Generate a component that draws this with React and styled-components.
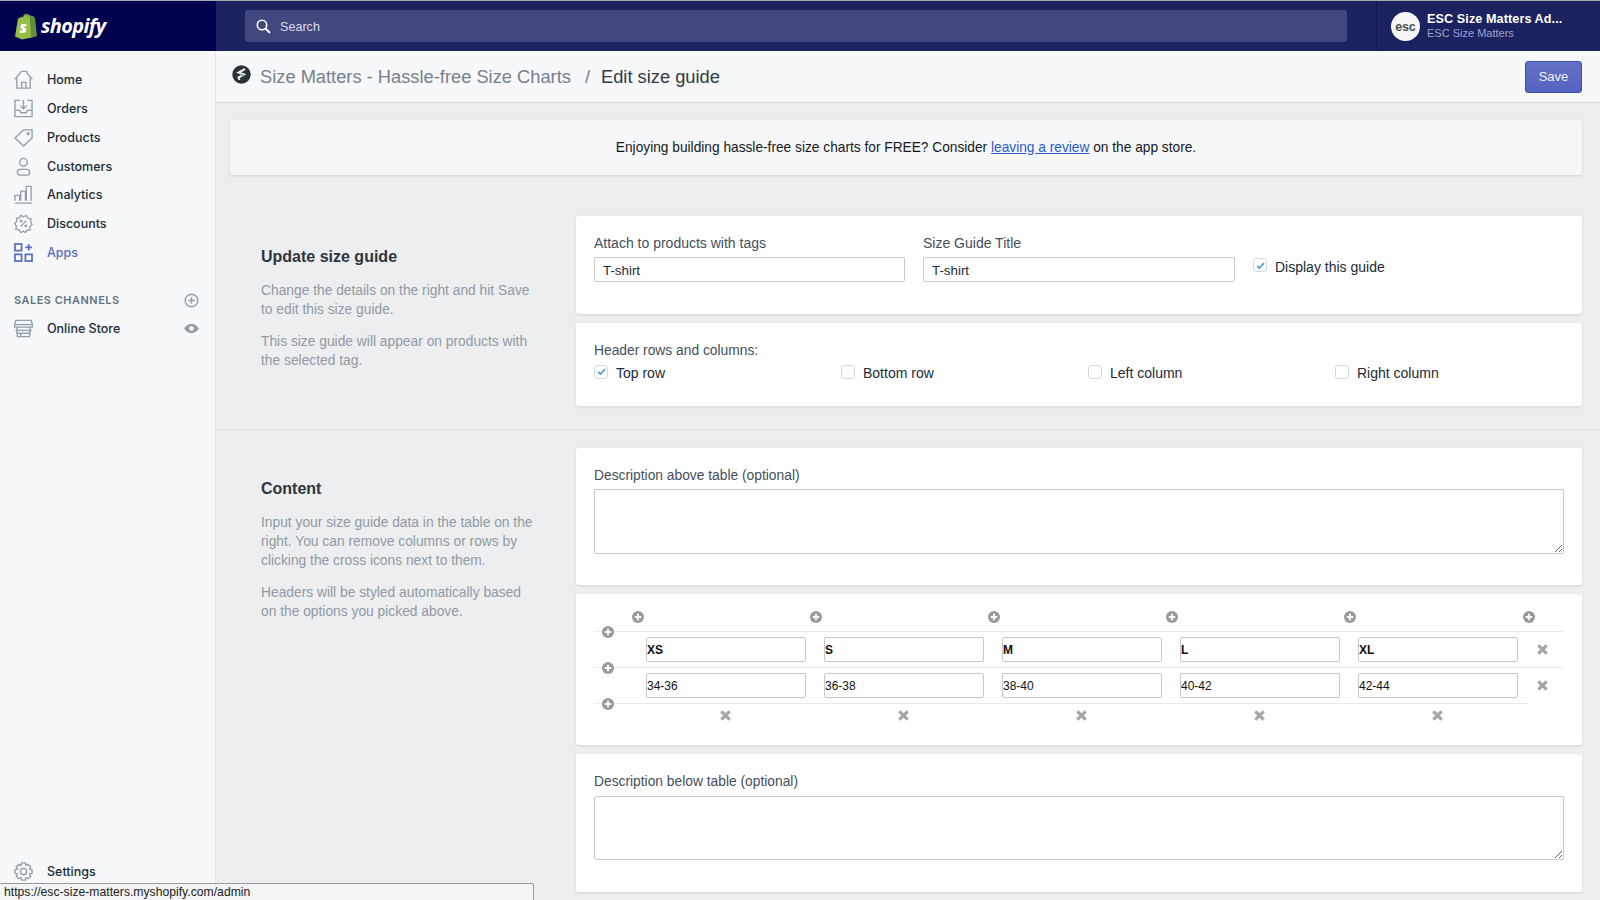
import React from "react";
import styled, { createGlobalStyle } from "styled-components";

const Global = createGlobalStyle`
  html, body { margin: 0; padding: 0; height: 900px; overflow: hidden; background: #eceef0; }
  body { font-family: "Liberation Sans", Arial, sans-serif; color: #212b36; }
  * { box-sizing: border-box; }
`;

const Page = styled.div`
  position: relative; width: 1600px; height: 900px; overflow: hidden;
  display: flex; flex-direction: column; border-top: 1px solid #a9a9ad;
`;
const TopBar = styled.header`display: flex; height: 50px; background: #1c2260; flex: none;`;
const LogoArea = styled.div`
  width: 216px; flex: none; background: #00004f; display: flex; align-items: center;
  padding-left: 14px; gap: 3px;
`;
const Wordmark = styled.span`
  font-family: "Open Sans", sans-serif; font-style: italic; font-weight: 700; font-size: 20px;
  letter-spacing: -0.65px; color: #fff; line-height: 1;
`;
const SearchArea = styled.div`flex: 1; padding: 9px 29px 0;`;
const SearchBox = styled.div`
  height: 32px; background: #43477f; border-radius: 3px; display: flex; align-items: center;
  padding: 1px 0 0 11px; gap: 9px; color: #d9dbe8; font-size: 12.6px;
`;
const Account = styled.div`
  width: 224px; flex: none; border-left: 1px solid #12174f; display: flex; align-items: center;
  padding-left: 14px; gap: 7px;
`;
const Avatar = styled.div`
  width: 29px; height: 29px; border-radius: 50%; background: #f6f6f6; color: #4a4f52;
  display: flex; align-items: center; justify-content: center; font-size: 12.5px; font-weight: 700;
  letter-spacing: -0.2px; margin-top: 1px;
`;
const AccountText = styled.div`display: flex; flex-direction: column;`;
const AccountName = styled.div`color: #fff; font-size: 12.6px; font-weight: 700; line-height: 15px; letter-spacing: .1px;`;
const AccountSub = styled.div`color: #9ea3c9; font-size: 11px; line-height: 13px;`;

const Body = styled.div`flex: 1; display: flex; min-height: 0;`;
const Sidebar = styled.nav`
  width: 216px; flex: none; background: #f6f8f9; border-right: 1px solid #e3e6e9;
  display: flex; flex-direction: column; padding: 14.4px 0 14px 14px;
`;
const NavItem = styled.div`
  display: flex; align-items: center; height: 28.8px; gap: 14px;
  font-family: Inter, sans-serif; font-weight: 500; font-size: 12.5px;
  color: ${p => (p.$active ? "#5c6ac4" : "#212b36")};
  margin-top: ${p => p.$bottom ? "auto" : "0"};
`;
const NavIcon = styled.svg`width: 19px; height: 19px; flex: none; fill: none; stroke: ${p => p.$active ? "#5c6ac4" : "#919eab"}; stroke-width: 1.4;`;
const ChannelsHead = styled.div`
  display: flex; align-items: center; justify-content: space-between; padding-right: 16px;
  margin-top: 18.6px; height: 29px;
  font-family: Inter, sans-serif; font-size: 10.9px; font-weight: 600; letter-spacing: .55px; color: #637381;
`;
const NavRow = styled.div`display: flex; align-items: center; justify-content: space-between; padding-right: 16px;`;

const Main = styled.main`flex: 1; display: flex; flex-direction: column; min-width: 0;`;
const PageHead = styled.div`
  height: 52px; flex: none; background: #f6f8f9; border-bottom: 1px solid #dcdfe3;
  display: flex; align-items: center; padding: 0 18px 0 16px;
`;
const MarkSlot = styled.span`display: flex; margin-top: -5px;`;
const Crumb = styled.span`font-size: 18.3px; color: #76818d; margin-left: 9px; padding-top: 1px;`;
const Sep = styled.span`font-size: 18.3px; color: #76818d; margin: 0 11px 0 14px; padding-top: 1px;`;
const Current = styled.span`font-size: 18.3px; color: #333b44; padding-top: 1px;`;
const SaveButton = styled.button`
  margin-left: auto; width: 57px; height: 32px; border-radius: 3px; border: 1px solid #3f4eae;
  background: linear-gradient(#6371c7, #5563c1); color: #eef0fa; font: 13px "Liberation Sans", Arial, sans-serif;
`;
const Banner = styled.div`
  margin: 17px 18px 0 14px; height: 55px; flex: none; border-radius: 3px; background: #f5f7f8;
  box-shadow: 0 1px 3px rgba(63,63,68,.15); display: flex; align-items: center; justify-content: center;
  font-size: 13.72px; color: #15191d; padding-bottom: 1px;
`;
const Link = styled.a`color: #2a5bd7; text-decoration: underline;`;

const Section = styled.section`
  display: grid; grid-template-columns: 360px minmax(0, 1fr); padding: ${p => p.$top}px 18px 0 0;
  border-bottom: ${p => (p.$divider ? "1px solid #dfe2e5" : "0")};
`;
const Intro = styled.div`padding: ${p => p.$top}px 0 0 45px;`;
const IntroTitle = styled.h2`margin: 0 0 14px; font-size: 16px; line-height: 20px; font-weight: 700; color: #2f363d;`;
const IntroText = styled.p`margin: 0 0 13px; width: 276px; font-size: 13.8px; line-height: 19px; color: #919aa4;`;
const Cards = styled.div`display: flex; flex-direction: column; gap: 9px; padding-bottom: ${p => p.$bottom || 0}px;`;
const Card = styled.div`
  background: #fff; border-radius: 3px; box-shadow: 0 1px 3px rgba(63,63,68,.15);
  padding: ${p => p.$top ?? 18}px 18px 0; height: ${p => p.$h}px;
`;
const FieldRow = styled.div`display: grid; grid-template-columns: 311px 312px 1fr; column-gap: 18px;`;
const Label = styled.label`display: block; font-size: ${p => p.$size || 13.8}px; line-height: 18px; color: #454f5b; padding-top: ${p => p.$pad || 0}px; margin-bottom: ${p => p.$gap ?? 5}px;`;
const TextInput = styled.input`
  display: block; width: 100%; height: 25px; padding: 1px 8px 0; border: 1px solid #c7ccd1; border-radius: 2px;
  font: 13.33px "Liberation Sans", Arial, sans-serif; color: #212b36; background: #fff; outline: 0;
`;
const CheckLine = styled.div`display: flex; align-items: center; gap: 8px; font-size: 14px; color: #212b36; padding-top: ${p => p.$top || 0}px; padding-left: ${p => p.$left || 0}px; line-height: 16px;`;
const Box = styled.span`
  width: 14px; height: 14px; flex: none; border: 1px solid #d5d9dd; border-radius: 3px; background: #fff;
  display: flex; align-items: center; justify-content: center; margin-top: -3px;
  svg { width: 9px; height: 9px; }
`;
const CheckGrid = styled.div`display: grid; grid-template-columns: 247px 247px 247px 1fr;`;
const TextBlock = styled.textarea`
  display: block; width: 100%; height: ${p => p.$h}px; border: 1px solid #c4c9ce; border-radius: 2px; outline: 0; background: #fff;
`;

const AddColumns = styled.div`display: flex; gap: 166px; height: 37px; padding: 17px 0 0 38px; & > :last-child { margin-left: 1px; }`;
const GridRow = styled.div`
  position: relative; display: flex; align-items: flex-start; height: 36px; padding: 5px 0 0 52px; gap: 18px;
  border-top: 1px solid #e8eaec;
`;
const FootRow = styled(GridRow)`width: 934px;`;
const AddRow = styled.span`position: absolute; left: 8px; top: -6px; display: flex;`;
const CellInput = styled.input`
  width: 160px; height: 25px; flex: none; padding: 0; border: 1px solid #c8c8c8; border-radius: 2px; outline: 0;
  font: ${p => (p.$head ? "700" : "400")} 12px "Liberation Sans", Arial, sans-serif; color: #111; background: #fff;
`;
const RemoveSlot = styled.span`width: ${p => p.$w || 12}px; flex: none; display: flex; justify-content: center; padding: ${p => p.$top}px ${p => p.$end || 0}px 0 0;`;
const StatusTip = styled.div`
  position: absolute; left: -1px; bottom: 0; width: 535px; height: 17px; background: #f3f4f5;
  border: 1px solid #9a9a9a; border-bottom: 0; border-radius: 0 3px 0 0; padding-left: 4px;
  font-size: 12.2px; line-height: 16px; color: #222;
`;

const Home = () => <NavIcon viewBox="0 0 20 20"><path d="M1.5 9 8 1.5h5.5V3L18.5 9H17v10H3V9z" /><path d="M8 19v-6h4.5v6" /></NavIcon>;
const Orders = () => <NavIcon viewBox="0 0 20 20"><path d="M6 1.5H1v17h18v-17h-5" /><path d="M1 12h5l1 2.5h6l1-2.5h5" /><path d="M10 1v9M6.8 7l3.2 3.2L13.2 7" /></NavIcon>;
const Tag = () => <NavIcon viewBox="0 0 20 20"><path d="M1 10.5 10 2h9v8.5L10 19z" /><circle cx="15" cy="6" r="1" /></NavIcon>;
const Person = () => <NavIcon viewBox="0 0 20 20"><circle cx="10" cy="5.5" r="4" /><rect x="3.5" y="13" width="13" height="6" rx="3" /></NavIcon>;
const Chart = () => <NavIcon viewBox="0 0 20 20"><path d="M1 19h18M1 16.5V11h5v5.5M7 16.5V6.5h5v10M13 16.5V1.5h5v15" /></NavIcon>;
const Discount = () => <NavIcon viewBox="0 0 20 20"><path d="M7 1.5 10 3l3-1.5 1.5 3 3.5.7-.5 3.3L19 11l-2.3 2.3.3 3.5-3.3.3L12 19.5 10 18l-3 1.5-1.5-3-3.5-.5.5-3.5L.8 10 3 7.5 2.700 4.500l3-.3z" /><path d="M7 13l6-6" /><circle cx="7.500" cy="7.500" r=".8" /><circle cx="12.500" cy="12.500" r=".8" /></NavIcon>;
const Apps = () => <NavIcon $active viewBox="0 0 20 20" style={{ strokeWidth: 1.8 }}><rect x="1" y="1" width="7" height="7" /><rect x="1" y="12" width="7" height="7" /><rect x="12" y="12" width="7" height="7" /><path d="M15.500 1v7M12 4.500h7" /></NavIcon>;
const Store = () => <NavIcon viewBox="0 0 20 20"><path d="M2 1.500h16L19.500 6v2.500h-19V6zM.5 6h19M3 9v6h14V9M1.500 12h17M3.500 15v3.500h13V15M7 15v3.500" /></NavIcon>;
const Gear = () => <NavIcon viewBox="0 0 20 20"><circle cx="10" cy="10" r="3.300" /><path d="M8 1h4l.6 2.600 2.300-1.200 2.800 2.800-1.300 2.300 2.600.6v3.800l-2.600.6 1.300 2.300-2.800 2.800-2.300-1.300-.6 2.700H8l-.6-2.700-2.300 1.300-2.800-2.800 1.300-2.300L1 11.900V8.100l2.600-.6-1.300-2.300 2.800-2.800 2.300 1.200z" /></NavIcon>;
const Hollow = styled.svg`width: 15px; height: 15px; flex: none; fill: none; stroke: #919eab; stroke-width: 1.500;`;
const AddChannel = () => <Hollow viewBox="0 0 16 16"><circle cx="8" cy="8" r="6.700" /><path d="M8 4.500v7M4.500 8h7" /></Hollow>;
const Eye = () => <Hollow viewBox="0 0 16 16" style={{ fill: "#919eab", stroke: "none" }}><path fillRule="evenodd" d="M8 3c3.600 0 6.500 2.500 7.800 5-1.300 2.500-4.200 5-7.800 5S1.500 10.500.2 8C1.500 5.500 4.400 3 8 3zm0 2.500a2.500 2.500 0 1 0 0 5 2.500 2.500 0 0 0 0-5z" /></Hollow>;
const Plus = () => <svg width="12" height="12" viewBox="0 0 12 12"><circle cx="6" cy="6" r="6" fill="#9a9a9a" /><path d="M6 2.800v6.400M2.800 6h6.400" stroke="#fff" strokeWidth="1.800" /></svg>;
const Cross = () => <svg width="11" height="11" viewBox="0 0 10 10"><path d="M1.200 1.200l7.600 7.600M8.800 1.200l-7.600 7.600" stroke="#a5a5a5" strokeWidth="2.800" /></svg>;
const Tick = () => <svg viewBox="0 0 10 10"><path d="M1.200 5.400 3.800 7.800 8.800 2.400" fill="none" stroke="#4a9ad9" strokeWidth="1.800" /></svg>;
const Magnifier = () => <svg width="15" height="15" viewBox="0 0 15 15" fill="none" stroke="#fff" strokeWidth="1.600"><circle cx="6" cy="6" r="4.700" /><path d="M9.500 9.500 14 14" strokeWidth="2" /></svg>;
const Bag = () => (
  <svg width="24" height="27" viewBox="0 0 24 27">
    <path d="M1 23.500 4 5.500 9 3.500C10 .8 12 .2 14 1.500l2 1 1.800 22L8 26.500z" fill="#95bf47" />
    <path d="M16 2.500l3 .5 2 1.800 2 18.500-6 1.400z" fill="#5e8e3e" />
    <path d="M9 4.500C9.500 2 11.500 1 13 2l.5 2" fill="none" stroke="#00004f" strokeWidth=".6" opacity=".6" />
    <text x="5.500" y="20" fontFamily="Open Sans, sans-serif" fontWeight="800" fontStyle="italic" fontSize="15" fill="#fff">s</text>
  </svg>
);
const AppMark = () => (
  <svg width="19" height="19" viewBox="0 0 19 19">
    <circle cx="9.500" cy="9.500" r="9.200" fill="#2a3237" />
    <path d="M13 4 6.500 7.500l5.500 2-5.500 3 1 2.500" fill="none" stroke="#e9efed" strokeWidth="2" />
    <path d="M9 9.500l3 1.500" stroke="#4fb79a" strokeWidth="1.500" />
  </svg>
);

const navItems = [
  ["Home", Home], ["Orders", Orders], ["Products", Tag], ["Customers", Person],
  ["Analytics", Chart], ["Discounts", Discount], ["Apps", Apps, true],
];
const heads = ["XS", "S", "M", "L", "XL"];
const sizes = ["34-36", "36-38", "38-40", "40-42", "42-44"];

const TableRow = ({ values, head }) => (
  <GridRow>
    <AddRow><Plus /></AddRow>
    {values.map(v => <CellInput key={v} $head={head} defaultValue={v} />)}
    <RemoveSlot $top={7}><Cross /></RemoveSlot>
  </GridRow>
);

export default function App() {
  return (
    <Page>
      <Global />
      <TopBar>
        <LogoArea><Bag /><Wordmark>shopify</Wordmark></LogoArea>
        <SearchArea><SearchBox><Magnifier /><span>Search</span></SearchBox></SearchArea>
        <Account>
          <Avatar>esc</Avatar>
          <AccountText>
            <AccountName>ESC Size Matters Ad...</AccountName>
            <AccountSub>ESC Size Matters</AccountSub>
          </AccountText>
        </Account>
      </TopBar>
      <Body>
        <Sidebar>
          {navItems.map(([label, Icon, active]) => (
            <NavItem key={label} $active={active}><Icon />{label}</NavItem>
          ))}
          <ChannelsHead>SALES CHANNELS<AddChannel /></ChannelsHead>
          <NavRow>
            <NavItem><Store />Online Store</NavItem>
            <Eye />
          </NavRow>
          <NavItem $bottom><Gear />Settings</NavItem>
        </Sidebar>
        <Main>
          <PageHead>
            <MarkSlot><AppMark /></MarkSlot>
            <Crumb>Size Matters - Hassle-free Size Charts</Crumb>
            <Sep>/</Sep>
            <Current>Edit size guide</Current>
            <SaveButton>Save</SaveButton>
          </PageHead>
          <Banner>
            <span>Enjoying building hassle-free size charts for FREE? Consider <Link href="#">leaving a review</Link> on the app store.</span>
          </Banner>
          <Section $top={41} $divider>
            <Intro $top={31}>
              <IntroTitle>Update size guide</IntroTitle>
              <IntroText>Change the details on the right and hit Save to edit this size guide.</IntroText>
              <IntroText>This size guide will appear on products with the selected tag.</IntroText>
            </Intro>
            <Cards $bottom={23}>
              <Card $h={98}>
                <FieldRow>
                  <div><Label $size={14}>Attach to products with tags</Label><TextInput defaultValue="T-shirt" /></div>
                  <div><Label $size={14}>Size Guide Title</Label><TextInput defaultValue="T-shirt" /></div>
                  <CheckLine $top={17}><Box><Tick /></Box>Display this guide</CheckLine>
                </FieldRow>
              </Card>
              <Card $h={83} $top={18}>
                <Label $pad={1} $gap={5}>Header rows and columns:</Label>
                <CheckGrid>
                  <CheckLine><Box><Tick /></Box>Top row</CheckLine>
                  <CheckLine><Box />Bottom row</CheckLine>
                  <CheckLine><Box />Left column</CheckLine>
                  <CheckLine><Box />Right column</CheckLine>
                </CheckGrid>
              </Card>
            </Cards>
          </Section>
          <Section $top={18}>
            <Intro $top={31}>
              <IntroTitle>Content</IntroTitle>
              <IntroText>Input your size guide data in the table on the right. You can remove columns or rows by clicking the cross icons next to them.</IntroText>
              <IntroText>Headers will be styled automatically based on the options you picked above.</IntroText>
            </Intro>
            <Cards>
              <Card $h={137} $top={18}>
                <Label $pad={1} $gap={4}>Description above table (optional)</Label>
                <TextBlock $h={65} />
              </Card>
              <Card $h={151} $top={0}>
                <AddColumns>{[0, 1, 2, 3, 4, 5].map(i => <Plus key={i} />)}</AddColumns>
                <TableRow values={heads} head />
                <TableRow values={sizes} />
                <FootRow>
                  <AddRow><Plus /></AddRow>
                  {sizes.map(s => <RemoveSlot key={s} $w={160} $top={1} $end={2}><Cross /></RemoveSlot>)}
                </FootRow>
              </Card>
              <Card $h={138} $top={18}>
                <Label $pad={1} $gap={5}>Description below table (optional)</Label>
                <TextBlock $h={64} />
              </Card>
            </Cards>
          </Section>
        </Main>
      </Body>
      <StatusTip>https://esc-size-matters.myshopify.com/admin</StatusTip>
    </Page>
  );
}
